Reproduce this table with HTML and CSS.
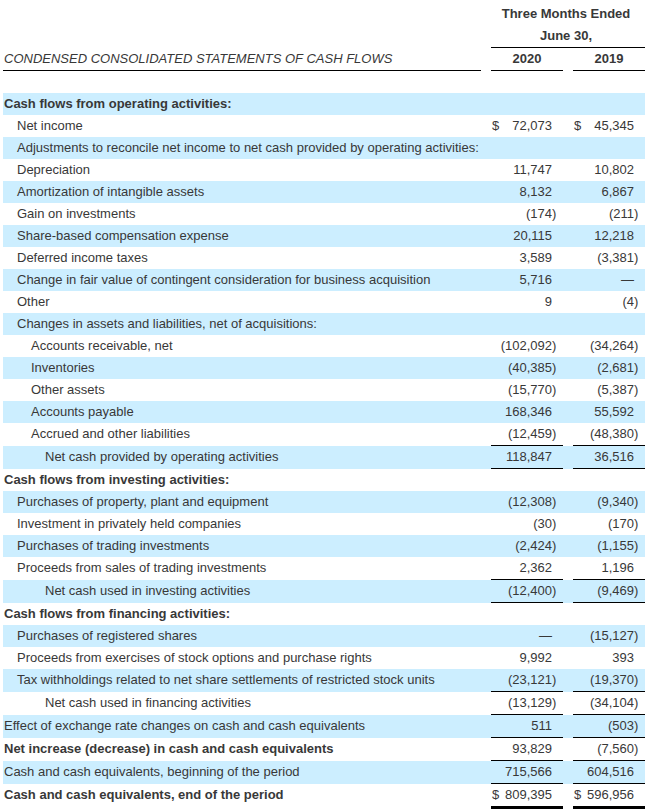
FILE: index.html
```html
<!DOCTYPE html>
<html lang="en">
<head>
<meta charset="utf-8">
<title>Condensed Consolidated Statements of Cash Flows</title>
<link rel="stylesheet" href="styles.css">
</head>
<body>
<div class="stmt">
  <div class="row hdr">
    <div class="lbl"></div><div></div>
    <div class="period">Three Months Ended</div>
  </div>
  <div class="row hdr">
    <div class="lbl"></div><div></div>
    <div class="period u">June 30,</div>
  </div>
  <div class="row hdr">
    <div class="lbl title u">CONDENSED CONSOLIDATED STATEMENTS OF CASH FLOWS</div><div></div>
    <div class="year u">2020</div><div></div>
    <div class="year u">2019</div>
  </div>
  <div class="row spacer"></div>

  <div class="row b"><div class="lbl l0 bold">Cash flows from operating activities:</div></div>
  <div class="row"><div class="lbl l1">Net income</div><div></div>
    <div class="v"><span class="d">$</span><span class="n">72,073</span><span class="p"></span></div><div></div>
    <div class="v"><span class="d">$</span><span class="n">45,345</span><span class="p"></span></div></div>
  <div class="row b"><div class="lbl l1">Adjustments to reconcile net income to net cash provided by operating activities:</div></div>
  <div class="row"><div class="lbl l1">Depreciation</div><div></div>
    <div class="v"><span class="n">11,747</span><span class="p"></span></div><div></div>
    <div class="v"><span class="n">10,802</span><span class="p"></span></div></div>
  <div class="row b"><div class="lbl l1">Amortization of intangible assets</div><div></div>
    <div class="v"><span class="n">8,132</span><span class="p"></span></div><div></div>
    <div class="v"><span class="n">6,867</span><span class="p"></span></div></div>
  <div class="row"><div class="lbl l1">Gain on investments</div><div></div>
    <div class="v"><span class="n">(174</span><span class="p">)</span></div><div></div>
    <div class="v"><span class="n">(211</span><span class="p">)</span></div></div>
  <div class="row b"><div class="lbl l1">Share-based compensation expense</div><div></div>
    <div class="v"><span class="n">20,115</span><span class="p"></span></div><div></div>
    <div class="v"><span class="n">12,218</span><span class="p"></span></div></div>
  <div class="row"><div class="lbl l1">Deferred income taxes</div><div></div>
    <div class="v"><span class="n">3,589</span><span class="p"></span></div><div></div>
    <div class="v"><span class="n">(3,381</span><span class="p">)</span></div></div>
  <div class="row b"><div class="lbl l1">Change in fair value of contingent consideration for business acquisition</div><div></div>
    <div class="v"><span class="n">5,716</span><span class="p"></span></div><div></div>
    <div class="v"><span class="n">—</span><span class="p"></span></div></div>
  <div class="row"><div class="lbl l1">Other</div><div></div>
    <div class="v"><span class="n">9</span><span class="p"></span></div><div></div>
    <div class="v"><span class="n">(4</span><span class="p">)</span></div></div>
  <div class="row b"><div class="lbl l1">Changes in assets and liabilities, net of acquisitions:</div></div>
  <div class="row"><div class="lbl l2">Accounts receivable, net</div><div></div>
    <div class="v"><span class="n">(102,092</span><span class="p">)</span></div><div></div>
    <div class="v"><span class="n">(34,264</span><span class="p">)</span></div></div>
  <div class="row b"><div class="lbl l2">Inventories</div><div></div>
    <div class="v"><span class="n">(40,385</span><span class="p">)</span></div><div></div>
    <div class="v"><span class="n">(2,681</span><span class="p">)</span></div></div>
  <div class="row"><div class="lbl l2">Other assets</div><div></div>
    <div class="v"><span class="n">(15,770</span><span class="p">)</span></div><div></div>
    <div class="v"><span class="n">(5,387</span><span class="p">)</span></div></div>
  <div class="row b"><div class="lbl l2">Accounts payable</div><div></div>
    <div class="v"><span class="n">168,346</span><span class="p"></span></div><div></div>
    <div class="v"><span class="n">55,592</span><span class="p"></span></div></div>
  <div class="row"><div class="lbl l2">Accrued and other liabilities</div><div></div>
    <div class="v u"><span class="n">(12,459</span><span class="p">)</span></div><div></div>
    <div class="v u"><span class="n">(48,380</span><span class="p">)</span></div></div>
  <div class="row b"><div class="lbl l3">Net cash provided by operating activities</div><div></div>
    <div class="v u"><span class="n">118,847</span><span class="p"></span></div><div></div>
    <div class="v u"><span class="n">36,516</span><span class="p"></span></div></div>

  <div class="row"><div class="lbl l0 bold">Cash flows from investing activities:</div></div>
  <div class="row b"><div class="lbl l1">Purchases of property, plant and equipment</div><div></div>
    <div class="v"><span class="n">(12,308</span><span class="p">)</span></div><div></div>
    <div class="v"><span class="n">(9,340</span><span class="p">)</span></div></div>
  <div class="row"><div class="lbl l1">Investment in privately held companies</div><div></div>
    <div class="v"><span class="n">(30</span><span class="p">)</span></div><div></div>
    <div class="v"><span class="n">(170</span><span class="p">)</span></div></div>
  <div class="row b"><div class="lbl l1">Purchases of trading investments</div><div></div>
    <div class="v"><span class="n">(2,424</span><span class="p">)</span></div><div></div>
    <div class="v"><span class="n">(1,155</span><span class="p">)</span></div></div>
  <div class="row"><div class="lbl l1">Proceeds from sales of trading investments</div><div></div>
    <div class="v u"><span class="n">2,362</span><span class="p"></span></div><div></div>
    <div class="v u"><span class="n">1,196</span><span class="p"></span></div></div>
  <div class="row b"><div class="lbl l3">Net cash used in investing activities</div><div></div>
    <div class="v u"><span class="n">(12,400</span><span class="p">)</span></div><div></div>
    <div class="v u"><span class="n">(9,469</span><span class="p">)</span></div></div>

  <div class="row"><div class="lbl l0 bold">Cash flows from financing activities:</div></div>
  <div class="row b"><div class="lbl l1">Purchases of registered shares</div><div></div>
    <div class="v"><span class="n">—</span><span class="p"></span></div><div></div>
    <div class="v"><span class="n">(15,127</span><span class="p">)</span></div></div>
  <div class="row"><div class="lbl l1">Proceeds from exercises of stock options and purchase rights</div><div></div>
    <div class="v"><span class="n">9,992</span><span class="p"></span></div><div></div>
    <div class="v"><span class="n">393</span><span class="p"></span></div></div>
  <div class="row b"><div class="lbl l1">Tax withholdings related to net share settlements of restricted stock units</div><div></div>
    <div class="v u"><span class="n">(23,121</span><span class="p">)</span></div><div></div>
    <div class="v u"><span class="n">(19,370</span><span class="p">)</span></div></div>
  <div class="row"><div class="lbl l3">Net cash used in financing activities</div><div></div>
    <div class="v u"><span class="n">(13,129</span><span class="p">)</span></div><div></div>
    <div class="v u"><span class="n">(34,104</span><span class="p">)</span></div></div>
  <div class="row b"><div class="lbl l0">Effect of exchange rate changes on cash and cash equivalents</div><div></div>
    <div class="v u"><span class="n">511</span><span class="p"></span></div><div></div>
    <div class="v u"><span class="n">(503</span><span class="p">)</span></div></div>
  <div class="row"><div class="lbl l0 bold">Net increase (decrease) in cash and cash equivalents</div><div></div>
    <div class="v u"><span class="n">93,829</span><span class="p"></span></div><div></div>
    <div class="v u"><span class="n">(7,560</span><span class="p">)</span></div></div>
  <div class="row b"><div class="lbl l0">Cash and cash equivalents, beginning of the period</div><div></div>
    <div class="v u"><span class="n">715,566</span><span class="p"></span></div><div></div>
    <div class="v u"><span class="n">604,516</span><span class="p"></span></div></div>
  <div class="row"><div class="lbl l0 bold">Cash and cash equivalents, end of the period</div><div></div>
    <div class="v uu"><span class="d">$</span><span class="n">809,395</span><span class="p"></span></div><div></div>
    <div class="v uu"><span class="d">$</span><span class="n">596,956</span><span class="p"></span></div></div>
</div>
</body>
</html>
```

FILE: styles.css
```css
html, body {
  margin: 0;
  padding: 0;
  background: #ffffff;
}

body {
  font-family: "Liberation Sans", Arial, sans-serif;
  font-size: 13px;
  color: #383838;
}

.stmt {
  padding: 3px 0 0 3px;
  width: 642px;
}

.row {
  display: grid;
  grid-template-columns: 478px 10px 72px 10px 72px;
  line-height: 22px;
  min-height: 22px;
}

.row.b {
  background: #cceeff;
}

.row.spacer {
  height: 22px;
}

.lbl {
  white-space: nowrap;
  overflow: visible;
}

.l0 { padding-left: 1px; }
.l1 { padding-left: 14px; }
.l2 { padding-left: 28px; }
.l3 { padding-left: 42px; }

.bold { font-weight: bold; }

.title {
  font-style: italic;
  padding-left: 1px;
}

.period {
  grid-column: 3 / 6;
  text-align: center;
  font-weight: bold;
  padding-right: 4px;
}

.year {
  text-align: center;
  font-weight: bold;
}

.u {
  border-bottom: 1px solid #000000;
}

.uu {
  border-bottom: 3px solid #000000;
}

.v {
  display: flex;
  align-items: baseline;
  padding: 0 6px 0 1px;
  white-space: nowrap;
}

.v .d {
  flex: none;
}

.v .n {
  margin-left: auto;
}

.v .p {
  flex: none;
  width: 5px;
}
```
